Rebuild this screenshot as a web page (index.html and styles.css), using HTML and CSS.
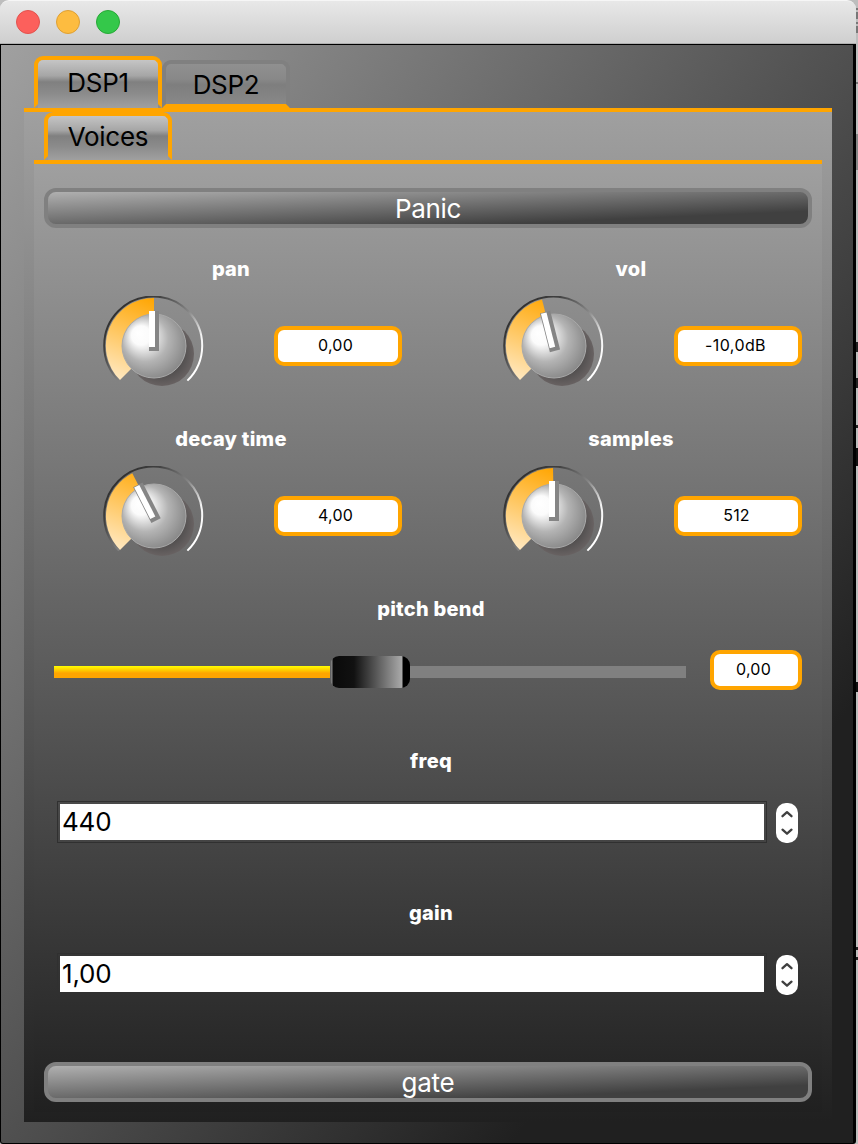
FILE: index.html
```
<!DOCTYPE html>
<html lang="en">
<head>
<meta charset="utf-8">
<title>DSP</title>
<link rel="stylesheet" href="styles.css">
</head>
<body>
<svg class="defs" width="0" height="0" aria-hidden="true">
  <defs>
    <linearGradient id="ring" gradientUnits="userSpaceOnUse" x1="16" y1="16" x2="86" y2="84">
      <stop offset="0" stop-color="#303030"/><stop offset=".2" stop-color="#404040"/><stop offset=".52" stop-color="#848484"/><stop offset=".8" stop-color="#f4f4f4"/><stop offset="1" stop-color="#fff"/>
    </linearGradient>
    <linearGradient id="level" gradientUnits="userSpaceOnUse" x1="52" y1="4" x2="18" y2="86">
      <stop offset="0" stop-color="#ffa500"/><stop offset="1" stop-color="#ffe8c0"/>
    </linearGradient>
    <radialGradient id="knob" gradientUnits="userSpaceOnUse" cx="51" cy="51" r="48" fx="36" fy="39">
      <stop offset="0" stop-color="#fff"/><stop offset=".2" stop-color="#fbfbfb"/><stop offset=".48" stop-color="#b4b4b4"/><stop offset="1" stop-color="#686868"/>
    </radialGradient>
    <radialGradient id="shade" gradientUnits="userSpaceOnUse" cx="60" cy="60" r="32">
      <stop offset="0" stop-color="#3c3c3c"/><stop offset=".5" stop-color="#484747"/><stop offset="1" stop-color="#686262"/>
    </radialGradient>
    <clipPath id="frame"><rect x="0" y="2" width="104" height="94"/></clipPath>
    <g id="base">
      <circle cx="60" cy="60" r="32" fill="url(#shade)"/>
      <path d="M17 86.6A49 49 0 1 1 85.4 86.6" fill="none" stroke="url(#ring)" stroke-width="2" clip-path="url(#frame)"/>
    </g>
    <circle id="cap" cx="52" cy="52" r="32" fill="url(#knob)" stroke="#aaa" stroke-width="1"/>
    <g id="hand">
      <rect x="47" y="17" width="10" height="40" fill="#858585"/>
      <rect x="47" y="17" width="6" height="36" fill="#fff"/>
    </g>
    <g id="turned">
      <rect x="46.5" y="17" width="10.5" height="40" fill="#858585"/>
      <rect x="47.3" y="17.6" width="5.7" height="35.4" fill="#fff"/>
    </g>
  </defs>
</svg>
<div class="window">
  <header class="titlebar">
    <span class="light close"></span><span class="light minimize"></span><span class="light maximize"></span>
  </header>
  <main class="body">
    <nav class="tabs outer-tabs">
      <div class="tab selected"><span>DSP1</span></div>
      <div class="tab idle"><span>DSP2</span></div>
    </nav>
    <section class="pane outer-pane">
      <nav class="tabs inner-tabs"><div class="tab selected voices"><span>Voices</span></div></nav>
      <section class="pane inner-pane">
        <div class="button"><span>Panic</span></div>
        <div class="dials">
          <div class="control">
            <h2 class="label"><span>pan</span></h2>
            <div class="row">
              <svg class="dial" viewBox="0 0 104 96" width="104" height="96"><use href="#base"/><path d="M18 86A48 48 0 0 1 52 4V52Z" fill="url(#level)"/><use href="#cap"/><use href="#hand"/></svg>
              <div class="value">0,00</div>
            </div>
          </div>
          <div class="control">
            <h2 class="label"><span>vol</span></h2>
            <div class="row">
              <svg class="dial" viewBox="0 0 104 96" width="104" height="96"><use href="#base"/><path d="M18 86A48 48 0 0 1 40 5.5L52 52Z" fill="url(#level)"/><use href="#cap"/><use href="#turned" transform="rotate(-14.3 52 52)"/></svg>
              <div class="value db">-10,0dB</div>
            </div>
          </div>
          <div class="control">
            <h2 class="label"><span>decay time</span></h2>
            <div class="row">
              <svg class="dial" viewBox="0 0 104 96" width="104" height="96"><use href="#base"/><path d="M18 86A48 48 0 0 1 30.3 9.2L52 52Z" fill="url(#level)"/><use href="#cap"/><use href="#turned" transform="rotate(-27 52 52)"/></svg>
              <div class="value">4,00</div>
            </div>
          </div>
          <div class="control">
            <h2 class="label"><span>samples</span></h2>
            <div class="row">
              <svg class="dial" viewBox="0 0 104 96" width="104" height="96"><use href="#base"/><path d="M18 86A48 48 0 0 1 51 4L52 52Z" fill="url(#level)"/><use href="#cap"/><use href="#hand"/></svg>
              <div class="value count">512</div>
            </div>
          </div>
        </div>
        <div class="bend">
          <h2 class="label"><span>pitch bend</span></h2>
          <div class="slider-row">
            <div class="slider"><div class="filled"></div><div class="handle"></div><div class="rest"></div></div>
            <div class="value small">0,00</div>
          </div>
        </div>
        <div class="number">
          <h2 class="label"><span>freq</span></h2>
          <div class="number-row">
            <div class="entry"><span>440</span></div>
            <svg class="stepper" viewBox="0 0 22 40" width="22" height="40"><rect width="22" height="40" rx="10" fill="#fff"/><path d="M6.5 13.2L11 9.2L15.5 13.2M6.5 26.7L11 30.7L15.5 26.7" fill="none" stroke="#404040" stroke-width="2.3" stroke-linecap="round" stroke-linejoin="round"/></svg>
          </div>
        </div>
        <div class="number">
          <h2 class="label"><span>gain</span></h2>
          <div class="number-row">
            <div class="entry"><span>1,00</span></div>
            <svg class="stepper" viewBox="0 0 22 40" width="22" height="40"><rect width="22" height="40" rx="10" fill="#fff"/><path d="M6.5 13.2L11 9.2L15.5 13.2M6.5 26.7L11 30.7L15.5 26.7" fill="none" stroke="#404040" stroke-width="2.3" stroke-linecap="round" stroke-linejoin="round"/></svg>
          </div>
        </div>
        <div class="button gate"><span>gate</span></div>
      </section>
    </section>
  </main>
</div>
</body>
</html>
```
FILE: styles.css
```
* { box-sizing: border-box; }
html, body { margin: 0; height: 100%; overflow: hidden; }
body {
  width: 858px;
  height: 1144px;
  font-family: Inter, "Liberation Sans", sans-serif;
  /* sliver of the desktop behind the window */
  background:
    linear-gradient(#777, #777) 856px 8px / 2px 2px no-repeat,
    linear-gradient(#777, #777) 856px 12px / 2px 7px no-repeat,
    linear-gradient(#777, #777) 856px 22px / 2px 2px no-repeat,
    linear-gradient(#777, #777) 856px 26px / 2px 7px no-repeat,
    linear-gradient(#777, #777) 856px 82px / 2px 2px no-repeat,
    linear-gradient(#888, #888) 856px 134px / 2px 36px no-repeat,
    linear-gradient(#222, #222) 856px 342px / 2px 10px no-repeat,
    linear-gradient(#222, #222) 856px 378px / 2px 10px no-repeat,
    linear-gradient(#222, #222) 856px 425px / 2px 3px no-repeat,
    linear-gradient(#111, #111) 856px 448px / 2px 18px no-repeat,
    linear-gradient(#111, #111) 856px 682px / 2px 10px no-repeat,
    linear-gradient(#222, #222) 856px 947px / 2px 3px no-repeat,
    linear-gradient(#222, #222) 856px 957px / 2px 3px no-repeat,
    #bdbdbd;
}
.defs { display: block; width: 0; height: 0; }
.window { width: 856px; height: 1144px; display: flex; flex-direction: column; }
.titlebar {
  height: 44px;
  display: flex;
  align-items: center;
  gap: 16px;
  padding-left: 16px;
  background: linear-gradient(#e8e8e8, #cfcfcf);
  border-top: 1px solid #f6f6f6;
  border-bottom: 1px solid #b0b0b0;
  border-radius: 9px 9px 0 0;
}
.light { width: 24px; height: 24px; border-radius: 50%; border: 1px solid; }
.close { background: #fc605c; border-color: #e3524e; }
.minimize { background: #fdbc40; border-color: #dfa033; }
.maximize { background: #34c84a; border-color: #27a936; }
.body {
  height: 1100px;
  border: 1px solid #000;
  border-right-width: 3px;
  padding: 11px 21px 21px 23px;
  border-radius: 0 0 3px 3px;
  background: linear-gradient(to bottom right, #a0a0a0, #202020 80%);
}
.tabs { display: flex; align-items: flex-end; padding-left: 10px; }
.outer-tabs { height: 52px; }
.tab {
  display: flex;
  justify-content: center;
  align-items: center;
  width: 128px;
  padding-top: 2px;
  border: 4px solid;
  border-radius: 9px 9px 0 0;
  color: #000;
  font-size: 26px;
  letter-spacing: -0.3px;
  line-height: 30px;
}
.selected {
  height: 52px;
  border-color: #ffa500 #ffa500 transparent;
  background: linear-gradient(#cdcdcd, #a6a6a6 38%, #808080 50%, #8b8b8b 72%, #a0a0a0) border-box;
}
.idle {
  height: 48px;
  border-color: #808080 #808080 #ffa500;
  background: linear-gradient(#909090, #888 38%, #7e7e7e 52%, #888);
}
.inner-tabs { height: 48px; }
.voices { height: 48px; }
.pane { border-top: 4px solid #ffa500; background: linear-gradient(#a0a0a0, #202020) border-box; }
.outer-pane { height: 1014px; width: 808px; padding: 0 10px 10px; }
.inner-pane { height: 952px; padding: 24px 10px 10px; display: flex; flex-direction: column; }
.button {
  flex: none;
  height: 40px;
  padding-top: 2px;
  border: 4px solid #808080;
  border-radius: 12px;
  background: linear-gradient(to bottom right, #b0b0b0, #404040 80%);
  display: flex;
  align-items: center;
  justify-content: center;
  color: #fff;
  font-size: 26px;
  letter-spacing: -0.3px;
  line-height: 30px;
}
.dials { display: grid; grid-template-columns: 342px 342px; column-gap: 58px; padding: 26px 0 0 16px; }
.control { height: 170px; }
.label { margin: 0; height: 30px; display: flex; justify-content: center; align-items: center; font-size: 20px; font-weight: 800; letter-spacing: 0.25px; line-height: 30px; color: #fff; }
.row { display: flex; justify-content: space-between; padding: 10px 0 0 42px; }
.dial { flex: none; }
.value {
  flex: none;
  width: 128px;
  height: 40px;
  margin-top: 32px;
  padding-right: 5px;
  border: 4px solid #ffa500;
  border-radius: 10px;
  background: #fff;
  color: #000;
  font-size: 16px;
  letter-spacing: 0.2px;
  line-height: 31px;
  text-align: center;
}
.db { letter-spacing: 0.4px; }
.count { padding-right: 3px; }
.small { width: 92px; margin: 0; }
.bend { height: 152px; padding: 0 10px 0 16px; }
.slider-row { display: flex; justify-content: space-between; margin: 26px 0 0 -6px; }
.slider { width: 632px; height: 44px; display: flex; align-items: center; }
.filled { width: 276px; height: 12px; background: linear-gradient(#ff0, #ffa500 60%); }
.handle {
  width: 80px;
  height: 32px;
  border-radius: 9px;
  background: linear-gradient(to right, #555 0, #888 2px, #0a0a0a 3px, #111 30%, #aaa 72px, #000 73px);
}
.rest { flex: 1; height: 12px; background: #808080; }
.number { height: 152px; padding: 0 10px 0 13px; }
.number .label { padding-left: 3px; }
.number-row { display: flex; gap: 9px; padding-top: 25px; }
.entry {
  width: 710px;
  height: 42px;
  border: 1px solid #303030;
  padding: 2px;
  background: #fff content-box;
  color: #000;
  font-size: 26px;
  letter-spacing: -0.2px;
  line-height: 36px;
}
.entry span { padding-left: 2px; }
.stepper { margin-top: 2px; }
.gate { margin-top: 12px; }
```
